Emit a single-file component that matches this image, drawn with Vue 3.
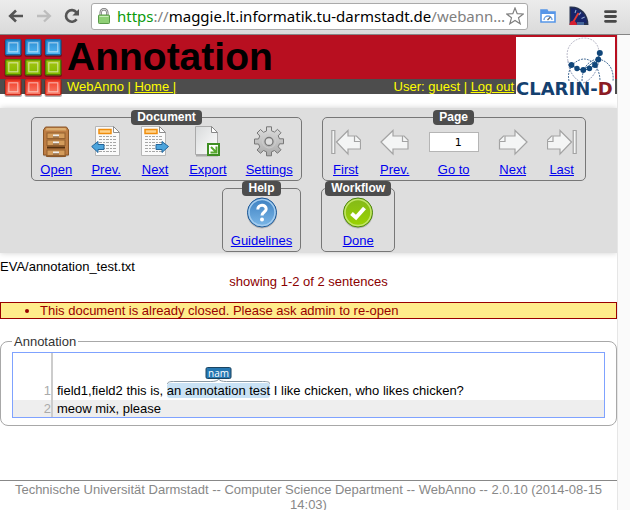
<script setup>
import { ref } from 'vue'

const page = ref('1')
const tiles = ['blue', 'blue', 'blue', 'green', 'green', 'green', 'red', 'red', 'red']
const docTools = [
  { id: 'open', label: 'Open' },
  { id: 'docPrev', label: 'Prev.' },
  { id: 'docNext', label: 'Next' },
  { id: 'export', label: 'Export' },
  { id: 'settings', label: 'Settings' }
]
const textLines = [6, 9, 12, 15, 18, 21]
</script>

<template>
  <div class="window">
    <div class="chrome">
      <button class="nav back" type="button" aria-label="Back">
        <svg width="16" height="14" viewBox="0 0 16 14"><path d="M15 7H3M8 1.5L2.2 7L8 12.5" fill="none" stroke="#555" stroke-width="2.6" /></svg>
      </button>
      <button class="nav forward" type="button" aria-label="Forward">
        <svg width="16" height="14" viewBox="0 0 16 14"><path d="M1 7H13M8 1.5L13.8 7L8 12.5" fill="none" stroke="#bdbdbd" stroke-width="2.4" /></svg>
      </button>
      <button class="nav reload" type="button" aria-label="Reload">
        <svg width="16" height="16" viewBox="0 0 16 16"><path d="M12.6 11.2A5.8 5.8 0 1 1 12.4 4.4" fill="none" stroke="#555" stroke-width="2.6" /><path d="M15 1V7.6H8.4Z" fill="#555" /></svg>
      </button>
      <div class="address">
        <svg class="lock" width="12" height="16" viewBox="0 0 12 16">
          <path d="M2.7 8V4.5a3.3 3.3 0 0 1 6.6 0V8" fill="none" stroke="#777" stroke-width="2.4" />
          <path d="M2.7 8V4.5a3.3 3.3 0 0 1 6.6 0V8" fill="none" stroke="#ddd" stroke-width="1" />
          <rect x="0.5" y="7" width="11" height="8.5" rx="0.8" fill="#8fcf75" stroke="#5a9a49" />
          <path d="M1.5 8.5h9" stroke="#c9edb9" />
        </svg>
        <span class="url"><span class="secure">https</span><span class="dim">://</span>maggie.lt.informatik.tu-darmstadt.de<span class="dim">/webann…</span></span>
        <button class="nav star" type="button" aria-label="Bookmark">
          <svg width="18" height="18" viewBox="0 0 18 18"><path d="M9 1L11.2 6.7L17.3 7L12.5 10.8L14.2 16.8L9 13.4L3.8 16.8L5.5 10.8L0.7 7L6.8 6.7Z" fill="#fff" stroke="#808080" stroke-width="1.2" /></svg>
        </button>
      </div>
      <button class="nav ext" type="button" aria-label="Page speed">
        <svg width="16" height="14" viewBox="0 0 16 14">
          <path d="M1 13V1h6l1 2h7v10z" fill="#fff" stroke="#5796e8" stroke-width="1.6" />
          <path d="M1 1h6v2h8v2H1z" fill="#5796e8" />
          <path d="M4 11a4 4 0 0 1 8 0" fill="none" stroke="#6ba2e6" stroke-width="1.4" /><path d="M7.5 11L10.5 8" stroke="#666" stroke-width="1.2" />
        </svg>
      </button>
      <button class="nav gauge" type="button" aria-label="Speed gauge">
        <svg width="20" height="20" viewBox="0 0 20 20">
          <path d="M0.5 0.5C11 -0.5 19.5 7 19.5 19H0.5Z" fill="#26324f" />
          <path d="M2 2C10 2 17.5 8 17.8 17H2Z" fill="#17256b" />
          <path d="M7 4l-1 3M12 6.5l-2.4 2.5M15.7 11l-3.2 1.4" stroke="#92a8ce" stroke-width="1.1" />
          <path d="M3 18L9.5 7" stroke="#e33a34" stroke-width="1.8" />
          <path d="M0.5 19C0.5 14 7 13 8 19Z" fill="#d51f31" /><path d="M8 16h7v3H8z" fill="#45669a" />
        </svg>
      </button>
      <button class="nav menu" type="button" aria-label="Menu">
        <svg width="13" height="13" viewBox="0 0 13 13"><path d="M1.5 1.7h10M1.5 6.5h10M1.5 11.3h10" stroke="#484848" stroke-width="2.8" stroke-linecap="round" /></svg>
      </button>
    </div>

    <div class="viewport">
      <div class="page">
        <header class="header">
          <svg class="logo" width="62" height="66" viewBox="0 0 62 66">
            <defs>
              <linearGradient id="blue" x1="0" y1="0" x2="0" y2="1"><stop offset="0" stop-color="#2b8bd1" /><stop offset="1" stop-color="#52b8f3" /></linearGradient>
              <linearGradient id="green" x1="0" y1="0" x2="0" y2="1"><stop offset="0" stop-color="#a7c414" /><stop offset="1" stop-color="#83bb00" /></linearGradient>
              <linearGradient id="red" x1="0" y1="0" x2="0" y2="1"><stop offset="0" stop-color="#f13a25" /><stop offset="1" stop-color="#f97f6c" /></linearGradient>
            </defs>
            <g v-for="(c, i) in tiles" :key="i" :transform="`translate(${(i % 3) * 20 + 5} ${Math.floor(i / 3) * 20 + 4})`">
              <rect x="-0.5" y="0.5" width="17.5" height="17.5" rx="2" fill="#000" opacity="0.3" />
              <rect x="0.7" y="0.7" width="15" height="15" rx="1" :class="'tile-' + c" stroke-width="1.4" :fill="`url(#${c})`" />
              <rect x="3.8" y="3.8" width="9" height="9" fill="none" stroke="#fff" stroke-opacity="0.55" stroke-width="1.2" />
            </g>
          </svg>
          <h1>Annotation</h1>
          <div class="subbar">
            <span>WebAnno | <a href="#home">Home |</a></span>
            <span>User: guest | <a href="#logout">Log out</a></span>
          </div>
          <div class="clarin">
            <svg width="99" height="64" viewBox="0 0 99 64">
              <g fill="none" stroke-width="0.8" stroke-dasharray="2 1">
                <path d="M52 24C48 10 58 1 68 1C78 1 83 8 83 16" stroke="#aab" />
                <path d="M53 44C50 30 61 22 68 22C77 22 84 32 84 44" stroke="#1b4a7d" />
                <path d="M66 44C66 32 72 23 82 22C94 24 98 34 97 44" stroke="#1b4a7d" />
                <path d="M52 24C53 34 57 41 66 46M67 46C76 43 82 33 83 23" stroke="#7180a6" />
              </g>
              <path d="M56 28L61 32L67 33L73 32L79 28L82 22L84 16" fill="none" stroke="#124879" />
              <path d="M67 33L82 22" stroke="#124879" stroke-width="0.8" />
              <g fill="#10467a">
                <circle cx="55.500" cy="28" r="2.900" /><circle cx="61" cy="31.500" r="2.700" /><circle cx="67.300" cy="33" r="2.900" /><circle cx="73.500" cy="31.500" r="2.700" /><circle cx="79" cy="28" r="2.900" /><circle cx="82.300" cy="22.500" r="2.900" /><circle cx="83.800" cy="16" r="3" />
              </g>
              <text x="0" y="58" class="clarin-text">CLARIN-<tspan class="clarin-d">D</tspan></text>
            </svg>
          </div>
        </header>

        <nav class="toolbar">
          <fieldset>
            <legend>Document</legend>
            <div class="tools">
              <a v-for="t in docTools" :key="t.id" class="tool" :href="'#' + t.id">
                <svg v-if="t.id === 'open'" width="30" height="32" viewBox="0 0 30 32">
                  <ellipse cx="15" cy="29.500" rx="13" ry="2" fill="#999" opacity="0.5" />
                  <path d="M4.500 1h21l2 3v25h-3v1.500H5.500V29h-3V4z" fill="#bd7d44" stroke="#8a5628" />
                  <path d="M5.500 2h19l1 2.500h-21z" fill="#dcae70" />
                  <g v-for="y in [7, 14, 24]" :key="y">
                    <rect x="6" :y="y" width="18" height="5.500" fill="#d49c5c" stroke="#94602f" />
                    <path :d="`M12 ${y + 2.5}h6`" stroke="#eee" stroke-width="2" /><path :d="`M12 ${y + 4}h6`" stroke="#765335" />
                  </g>
                  <path d="M6 21.500h18" stroke="#54300f" stroke-width="2" />
                </svg>
                <svg v-else-if="t.id === 'docPrev' || t.id === 'docNext'" width="30" height="32" viewBox="0 0 30 32">
                  <g :transform="t.id === 'docPrev' ? 'translate(4 0)' : 'translate(1 0)'">
                    <path d="M1.500 1.500h17.500l5 6v22.500h-22.500z" fill="#aaa" opacity="0.6" />
                    <path d="M0.500 0.500h18l6 6v23h-24z" fill="#fafafa" stroke="#b6b6b6" />
                    <path d="M18.500 0.500v6h6z" fill="#fff" stroke="#8d8d8d" />
                    <rect x="4" y="3.500" width="12" height="4" fill="#ffd28a" stroke="#ef8d0c" stroke-width="1.500" />
                    <path v-for="y in textLines" :key="y" :d="`M4 ${y + 4.5}h17`" stroke="#a6a6a6" stroke-dasharray="3 1 2 1" />
                  </g>
                  <path v-if="t.id === 'docPrev'" d="M0.700 20.500l6.300-5v3h6v5h-6v3z" fill="#4ca4dc" stroke="#22649a" />
                  <path v-else d="M28.500 20.500l-6.500-5v3h-6v5h6v3z" fill="#4ca4dc" stroke="#22649a" />
                </svg>
                <svg v-else-if="t.id === 'export'" width="30" height="32" viewBox="0 0 30 32">
                  <defs><linearGradient id="sheet" x1="0" y1="0" x2="1" y2="1"><stop offset="0" stop-color="#d8dadb" /><stop offset="1" stop-color="#fff" /></linearGradient></defs>
                  <path d="M3 29.500h22" stroke="#aaa" stroke-width="2" />
                  <path d="M2.500 0.500h16l6 6v22h-22z" fill="url(#sheet)" stroke="#aaa" />
                  <path d="M18.500 0.500v6h6z" fill="#fff" stroke="#888" />
                  <rect x="15" y="18" width="11" height="11" fill="#fff" stroke="#3e8e22" stroke-width="2" />
                  <path d="M18 21l4.500 4.500M23.500 20.500v6h-6" fill="none" stroke="#57a82d" stroke-width="2" />
                </svg>
                <svg v-else width="30" height="32" viewBox="0 0 30 32">
                  <defs><linearGradient id="gear" x1="0" y1="0" x2="0" y2="1"><stop offset="0" stop-color="#ddd" /><stop offset="1" stop-color="#aaa" /></linearGradient></defs>
                  <path d="M12.500 0.800h5v4l3 1.300l3-2.800l3.500 3.500l-2.800 3l1.300 3h4v5h-4l-1.300 3l2.800 3l-3.500 3.500l-3-2.800l-3 1.300v4h-5v-4l-3-1.300l-3 2.800L3 24l2.800-3l-1.300-3h-4v-5h4l1.300-3L3 7l3.500-3.500l3 2.800l3-1.300z" fill="url(#gear)" stroke="#777" />
                  <circle cx="15" cy="15.500" r="6.500" fill="none" stroke="#ccc" />
                  <circle cx="15" cy="15.500" r="4" fill="#dedede" stroke="#777" stroke-width="1.300" />
                </svg>
                <span>{{ t.label }}</span>
              </a>
            </div>
          </fieldset>

          <fieldset>
            <legend>Page</legend>
            <div class="tools">
              <a class="tool" href="#first">
                <svg width="30" height="32" viewBox="0 0 30 32" class="arrow">
                  <path d="M0.800 4.500h3v23h-3z" />
                  <path d="M5.500 16L17 4.500v5.500h8.500l4 4v9H17v5z" /><path d="M23.500 10v5.500h6" />
                </svg>
                <span>First</span>
              </a>
              <a class="tool" href="#prev">
                <svg width="30" height="32" viewBox="0 0 30 32" class="arrow">
                  <path d="M1 16L13 4.500v5.500h11l4 4v9H13v5z" /><path d="M22.500 10v5.500h5.500" />
                </svg>
                <span>Prev.</span>
              </a>
              <div class="tool">
                <div class="goto"><input v-model="page" type="text" aria-label="Page number" /></div>
                <a href="#goto">Go to</a>
              </div>
              <a class="tool" href="#next">
                <svg width="30" height="32" viewBox="0 0 30 32" class="arrow">
                  <path d="M29 16L17 4.500v5.500H5.500l-4 4v9H17v5z" /><path d="M7 10v5.500H1.500" />
                </svg>
                <span>Next</span>
              </a>
              <a class="tool" href="#last">
                <svg width="30" height="32" viewBox="0 0 30 32" class="arrow">
                  <path d="M26.200 4.500h3v23h-3z" />
                  <path d="M24.500 16L13 4.500v5.500H4.500l-4 4v9H13v5z" /><path d="M6 10v5.500H0.500" />
                </svg>
                <span>Last</span>
              </a>
            </div>
          </fieldset>

          <fieldset>
            <legend>Help</legend>
            <div class="tools">
              <a class="tool" href="#guidelines">
                <svg width="32" height="32" viewBox="0 0 32 32">
                  <defs><linearGradient id="help" x1="0" y1="0" x2="0" y2="1"><stop offset="0" stop-color="#3b7fc0" /><stop offset="1" stop-color="#7db8e8" /></linearGradient></defs>
                  <circle cx="16" cy="16.500" r="15" fill="#888" opacity="0.5" />
                  <circle cx="16" cy="15.500" r="14.500" fill="url(#help)" stroke="#1c5795" />
                  <circle cx="16" cy="15.500" r="13" fill="none" stroke="#a5cdef" stroke-width="1.500" />
                  <path d="M11.800 12.500C11.800 7 20.200 7 20.200 12C20.200 15 16 15 16 18.500" fill="none" stroke="#fff" stroke-width="3" />
                  <circle cx="16" cy="22.500" r="2" fill="#fff" />
                </svg>
                <span>Guidelines</span>
              </a>
            </div>
          </fieldset>

          <fieldset>
            <legend>Workflow</legend>
            <div class="tools wide">
              <a class="tool" href="#done">
                <svg width="32" height="32" viewBox="0 0 32 32">
                  <defs><linearGradient id="done" x1="0" y1="0" x2="0" y2="1"><stop offset="0" stop-color="#83b81a" /><stop offset="1" stop-color="#9bd400" /></linearGradient></defs>
                  <circle cx="16" cy="16.500" r="15" fill="#888" opacity="0.5" />
                  <circle cx="16" cy="15.500" r="14.500" fill="url(#done)" stroke="#4b8412" />
                  <circle cx="16" cy="15.500" r="13" fill="none" stroke="#c2e56b" stroke-width="1.500" />
                  <path d="M9.500 16.500L14 20.500L22.500 11" fill="none" stroke="#fff" stroke-width="4" />
                </svg>
                <span>Done</span>
              </a>
            </div>
          </fieldset>
        </nav>

        <main>
          <div class="docname">EVA/annotation_test.txt</div>
          <div class="showing">showing 1-2 of 2 sentences</div>
          <ul class="feedback"><li>This document is already closed. Please ask admin to re-open</li></ul>
          <fieldset class="annotation">
            <legend>Annotation</legend>
            <div class="editor">
              <div class="sentence first">
                <span class="num">1</span>
                <span class="text">field1,field2 this is, <span class="mark"><span class="tag">nam</span><svg class="brace" viewBox="0 0 104 5" preserveAspectRatio="none"><path d="M0.500 5C0.500 2.500 4 2.500 8 2.500H44Q51 2.500 52 0Q53 2.500 60 2.500H96C100 2.500 103.500 2.500 103.500 5" fill="none" stroke="#8a99a4" /></svg>an annotation test</span> I like chicken, who likes chicken?</span>
              </div>
              <div class="sentence second">
                <span class="num">2</span>
                <span class="text">meow mix, please</span>
              </div>
            </div>
          </fieldset>
        </main>

        <footer>Technische Universität Darmstadt -- Computer Science Department -- WebAnno -- 2.0.10 (2014-08-15 14:03)</footer>
      </div>
      <div class="scrollbar"></div>
    </div>
  </div>
</template>

<style>
body {
  margin: 0;
  background: #fff;
}
</style>

<style scoped>
.window {
  display: flex;
  flex-direction: column;
  height: 100vh;
  overflow: hidden;
  font: 13px/15px "Liberation Sans", Arial, sans-serif;
  color: #000;
}
svg {
  display: block;
  flex: none;
}
a {
  color: #00e;
}

/* browser bar */
.chrome {
  flex: none;
  display: flex;
  align-items: center;
  box-sizing: border-box;
  height: 35px;
  padding: 0 13px 2px 8px;
  background: linear-gradient(#ececec, #dadada);
  border-bottom: 1px solid #858585;
}
.nav {
  padding: 0;
  border: 0;
  background: none;
}
.forward {
  margin-left: 12px;
}
.reload {
  margin: 0 11px 0 12px;
}
.address {
  flex: 1;
  display: flex;
  align-items: center;
  box-sizing: border-box;
  height: 27px;
  padding: 0 3px 0 6px;
  background: #fff;
  border: 1px solid #aaa;
  border-radius: 3px;
}
.url {
  flex: 1;
  margin-left: 7px;
  font: 15px/20px "Noto Sans", sans-serif;
  white-space: nowrap;
}
.secure {
  color: #0b9a0b;
}
.dim {
  color: #808080;
}
.ext {
  margin-left: 12px;
}
.gauge {
  margin: 0 15px 0 13px;
}

.viewport {
  flex: 1;
  display: flex;
  min-height: 0;
}
.page {
  flex: 1;
  min-width: 0;
}
.scrollbar {
  width: 12px;
  background: #fafafa;
  border-left: 1px solid #e6e6e6;
}

/* header */
.header {
  display: grid;
  grid-template-columns: 67px 1fr 99px;
  grid-template-rows: 44px 15px;
  padding-right: 2px;
  background: linear-gradient(#b80f20 44px, #4d4d4d 44px);
}
.logo {
  grid-row: 1 / 3;
}
.tile-blue {
  stroke: #146aa8;
}
.tile-green {
  stroke: #4e8200;
}
.tile-red {
  stroke: #d12a1b;
}
h1 {
  margin: 0;
  font-size: 39px;
  line-height: 44px;
}
.subbar {
  grid-column: 2;
  grid-row: 2;
  display: flex;
  justify-content: space-between;
  padding-right: 2px;
  color: #ff0;
}
.subbar a {
  color: #ff0;
}
.clarin {
  grid-column: 3;
  grid-row: 1 / 3;
  margin-top: 2px;
  background: #fff;
}
.clarin-text {
  font: bold 18px "DejaVu Sans", sans-serif;
  fill: #14406f;
}
.clarin-d {
  fill: #8c1c24;
}

/* toolbar */
.toolbar {
  display: flex;
  flex-wrap: wrap;
  justify-content: center;
  gap: 0 20px;
  margin-top: 14px;
  padding: 2px 0 1px;
  background: #dedede;
  box-shadow: 0 0 6px #d0d0d0;
}
.toolbar fieldset {
  min-width: 0;
  margin: 0;
  padding: 0;
  border: 1px solid #777;
  border-radius: 5px;
}
.toolbar legend {
  margin: 0 auto;
  padding: 0 6px;
  background: #4d4d4d;
  border-radius: 4px;
  color: #fff;
  font-weight: bold;
  font-size: 12px;
  line-height: 15px;
}
.tools {
  display: flex;
  gap: 19px;
  padding: 1px 8px 3px;
}
.tools.wide {
  padding: 1px 20px 3px;
}
.tool {
  display: flex;
  flex-direction: column;
  align-items: center;
  gap: 4px;
  min-width: 30px;
}
.arrow {
  fill: #f4f5f5;
  stroke: #a3a3a3;
  stroke-width: 1.2px;
}
.goto {
  display: flex;
  align-items: center;
  height: 32px;
}
.goto input {
  box-sizing: border-box;
  width: 50px;
  height: 20px;
  padding: 0 16px 0 0;
  border: 1px solid #b5b5b5;
  background: #fff;
  font: 11px "DejaVu Sans", sans-serif;
  text-align: right;
}

/* content */
.docname {
  margin-top: 6px;
}
.showing {
  color: #8b0000;
  text-align: center;
}
.feedback {
  margin: 13px 0 15px;
  padding: 0 0 0 39px;
  background: #ffec8b;
  border: 1px solid #900;
  color: #900;
}
.annotation {
  margin: 0;
  padding: 3px 11px 7px;
  border: 1px solid #a8a8a8;
  border-radius: 8px;
}
.annotation legend {
  padding: 0 2px;
  color: #333;
}
.editor {
  border: 1px solid #7fa2ff;
}
.sentence {
  display: flex;
}
.num {
  flex: none;
  width: 38px;
  border-right: 2px solid #ccc;
  color: #aaa;
  text-align: right;
}
.text {
  padding-left: 4px;
}
.first > span {
  padding-top: 30px;
  padding-bottom: 2px;
}
.second {
  background: #eee;
}
.second > span {
  line-height: 17px;
}
.mark {
  position: relative;
  display: inline-block;
  background: #c9e2f5;
  border-radius: 3px;
}
.tag {
  position: absolute;
  bottom: 19px;
  left: 50%;
  transform: translateX(-50%);
  padding: 0 2px;
  background: #2577b1;
  border: 1px solid #1b4460;
  border-radius: 2px;
  color: #fff;
  font: 10px/10px "Open Sans", sans-serif;
}
.brace {
  position: absolute;
  bottom: 14px;
  left: 0;
  width: 100%;
  height: 5px;
}
footer {
  margin-top: 54px;
  padding: 1px 12px 0;
  border-top: 1px solid #888;
  color: #888;
  text-align: center;
}
</style>
